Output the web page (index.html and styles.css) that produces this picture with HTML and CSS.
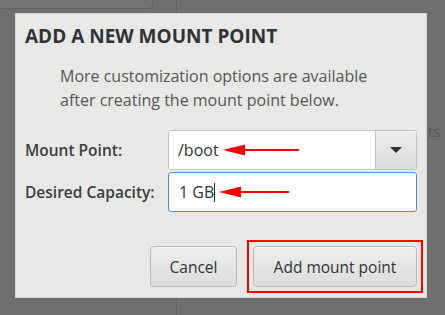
FILE: index.html
```html
<!DOCTYPE html>
<html lang="en">
<head>
    <meta charset="UTF-8">
    <title>Add a new mount point</title>
    <link rel="stylesheet" href="styles.css">
</head>
<body>

<div class="backdrop">
    <div class="back-panel"></div>
    <div class="back-line"></div>
    <div class="back-text">ts</div>
</div>

<div class="dialog">
    <h1 class="dialog-title">ADD A NEW MOUNT POINT</h1>
    <p class="dialog-note">More customization options are available after creating the mount point below.</p>

    <div class="form-grid">
        <label class="form-label">Mount Point:</label>
        <div class="combo">
            <div class="combo-entry">
                <span class="field-text">/boot</span>
                <svg class="arrow" width="78" height="12" viewBox="0 0 78 12">
                    <path d="M20 5 L76 5 L76 7 L20 7 Z" fill="#f00"/>
                    <path d="M0 6 L22 0.5 L22 11.5 Z" fill="#f00"/>
                </svg>
            </div>
            <div class="combo-button"><span class="caret"></span></div>
        </div>

        <label class="form-label">Desired Capacity:</label>
        <div class="entry">
            <span class="field-text">1 GB</span><span class="cursor"></span>
            <svg class="arrow" width="72" height="12" viewBox="0 0 72 12">
                <path d="M20 5 L70 5 L70 7 L20 7 Z" fill="#f00"/>
                <path d="M0 6 L22 0.5 L22 11.5 Z" fill="#f00"/>
            </svg>
        </div>
    </div>

    <div class="button-row">
        <button class="btn btn-cancel">Cancel</button>
        <button class="btn btn-add">Add mount point</button>
    </div>
</div>

</body>
</html>
```

FILE: styles.css
```css
html, body {
    margin: 0;
    padding: 0;
}

body {
    width: 445px;
    height: 315px;
    overflow: hidden;
    background-color: #6f6f6f;
    font-family: "Open Sans", "Noto Sans", sans-serif;
    position: relative;
    padding-top: 13px;
    box-sizing: border-box;
}

.back-panel {
    position: absolute;
    top: 0;
    left: 0;
    width: 152px;
    height: 8px;
    background-color: #737373;
    border-right: 1px solid #656565;
    border-bottom: 1px solid #656565;
    border-bottom-right-radius: 4px;
}

.back-line {
    position: absolute;
    top: 0;
    left: 176px;
    width: 1px;
    height: 315px;
    background-color: #636363;
}

.back-text {
    position: absolute;
    top: 121px;
    left: 428px;
    color: #585858;
    font-size: 15px;
}

.dialog {
    position: relative;
    margin-left: 15px;
    width: 412px;
    height: 285px;
    box-sizing: border-box;
    background-color: #e8e8e7;
    border: 1px solid #d4d4d2;
    padding: 10px 9px 0 9px;
    display: flex;
    flex-direction: column;
}

.dialog-title {
    margin: 0;
    font-size: 19px;
    font-weight: bold;
    color: #2e3436;
    line-height: 24px;
}

.dialog-note {
    margin: 16px 0 0 35px;
    width: 340px;
    font-size: 16px;
    line-height: 24px;
    color: #555753;
}

.form-grid {
    margin-top: 18px;
    display: grid;
    grid-template-columns: 143px 249px;
    row-gap: 2px;
    align-items: center;
}

.form-label {
    font-size: 15.5px;
    font-weight: 600;
    color: #3a3f40;
}

.combo {
    height: 40px;
    display: flex;
    box-sizing: border-box;
    border: 1px solid #c4c4c2;
    border-radius: 3px;
    background-color: #fff;
}

.combo-entry {
    flex: 1;
    position: relative;
    display: flex;
    align-items: center;
    padding-left: 9px;
}

.combo-button {
    width: 40px;
    border-left: 1px solid #c4c4c2;
    background: linear-gradient(#ededec, #dcdcdb);
    display: flex;
    align-items: center;
    justify-content: center;
    border-radius: 0 2px 2px 0;
}

.caret {
    width: 0;
    height: 0;
    border-left: 6px solid transparent;
    border-right: 6px solid transparent;
    border-top: 6px solid #2e3436;
}

.entry {
    height: 40px;
    position: relative;
    display: flex;
    align-items: center;
    box-sizing: border-box;
    border: 1px solid #4a90d9;
    border-radius: 3px;
    background-color: #fff;
    padding-left: 10px;
}

.field-text {
    font-size: 16px;
    color: #2e3436;
}

.cursor {
    width: 1px;
    height: 19px;
    background-color: #2e3436;
}

.arrow {
    margin-left: 4px;
}

.button-row {
    margin-top: auto;
    margin-bottom: 10px;
    display: flex;
    justify-content: flex-end;
    gap: 16px;
}

.btn {
    height: 41px;
    box-sizing: border-box;
    border: 1px solid #b8b8b5;
    border-radius: 4px;
    background: linear-gradient(#ededec, #dddddb);
    font-family: "Open Sans", "Noto Sans", sans-serif;
    font-size: 15.5px;
    color: #2e3436;
    box-shadow: inset 0 1px 0 #f6f6f5;
}

.btn-cancel {
    width: 87px;
}

.btn-add {
    width: 164px;
    position: relative;
}

.btn-add::after {
    content: "";
    position: absolute;
    top: -7px;
    left: -7px;
    right: -7px;
    bottom: -7px;
    border: 2px solid #ff0000;
}
```
